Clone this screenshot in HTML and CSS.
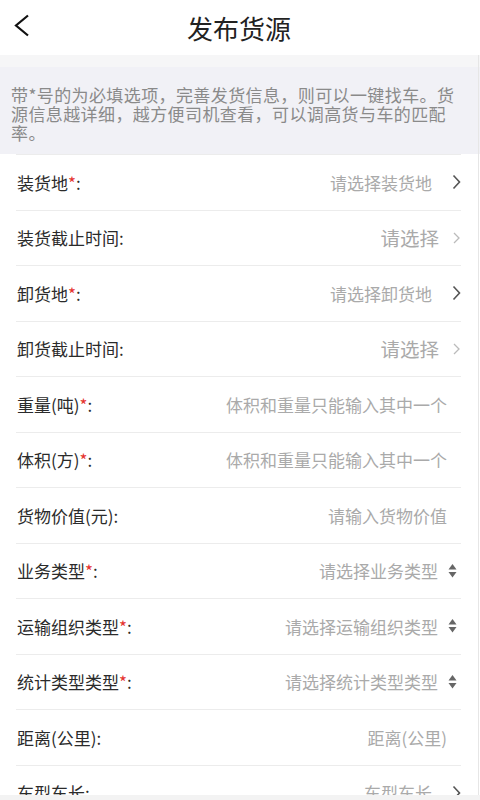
FILE: index.html
```html
<!DOCTYPE html>
<html lang="zh-CN">
<head>
    <meta charset="UTF-8">
    <meta name="viewport" content="width=device-width, initial-scale=1.0">
    <title>发布货源</title>
    <link rel="stylesheet" href="styles.css">
</head>
<body>
    <div class="page">
        <header class="topbar">
            <button class="back" type="button" aria-label="返回">
                <svg width="16" height="24" viewBox="0 0 16 24"><polyline points="14,1.5 2,11.5 14,21.5" fill="none" stroke="#111" stroke-width="2.2"/></svg>
            </button>
            <h1 class="title">发布货源</h1>
        </header>

        <div class="scroll">
            <div class="gap"></div>
            <p class="notice">带*号的为必填选项，完善发货信息，则可以一键找车。货源信息越详细，越方便司机查看，可以调高货与车的匹配率。</p>

            <ul class="form-list">
                <li class="row">
                    <span class="label">装货地<em>*</em>:</span>
                    <span class="value">请选择装货地</span>
                    <svg class="arrow" width="9" height="16" viewBox="0 0 9 16"><polyline points="1.5,1.5 7.5,8 1.5,14.5" fill="none" stroke="#555" stroke-width="1.6"/></svg>
                </li>
                <li class="row">
                    <span class="label">装货截止时间:</span>
                    <span class="value big">请选择</span>
                    <svg class="arrow small" width="7" height="12" viewBox="0 0 7 12"><polyline points="1,1 6,6 1,11" fill="none" stroke="#bbb" stroke-width="1.3"/></svg>
                </li>
                <li class="row">
                    <span class="label">卸货地<em>*</em>:</span>
                    <span class="value">请选择卸货地</span>
                    <svg class="arrow" width="9" height="16" viewBox="0 0 9 16"><polyline points="1.5,1.5 7.5,8 1.5,14.5" fill="none" stroke="#555" stroke-width="1.6"/></svg>
                </li>
                <li class="row">
                    <span class="label">卸货截止时间:</span>
                    <span class="value big">请选择</span>
                    <svg class="arrow small" width="7" height="12" viewBox="0 0 7 12"><polyline points="1,1 6,6 1,11" fill="none" stroke="#bbb" stroke-width="1.3"/></svg>
                </li>
                <li class="row">
                    <span class="label">重量(吨)<em>*</em>:</span>
                    <span class="value input">体积和重量只能输入其中一个</span>
                </li>
                <li class="row">
                    <span class="label">体积(方)<em>*</em>:</span>
                    <span class="value input">体积和重量只能输入其中一个</span>
                </li>
                <li class="row">
                    <span class="label">货物价值(元):</span>
                    <span class="value input">请输入货物价值</span>
                </li>
                <li class="row">
                    <span class="label">业务类型<em>*</em>:</span>
                    <span class="value">请选择业务类型</span>
                    <svg class="sort" width="9" height="16" viewBox="0 0 9 16"><polygon points="4.5,1 8.5,6.5 0.5,6.5" fill="#666"/><polygon points="0.5,9 8.5,9 4.5,14.5" fill="#666"/></svg>
                </li>
                <li class="row">
                    <span class="label">运输组织类型<em>*</em>:</span>
                    <span class="value">请选择运输组织类型</span>
                    <svg class="sort" width="9" height="16" viewBox="0 0 9 16"><polygon points="4.5,1 8.5,6.5 0.5,6.5" fill="#666"/><polygon points="0.5,9 8.5,9 4.5,14.5" fill="#666"/></svg>
                </li>
                <li class="row">
                    <span class="label">统计类型类型<em>*</em>:</span>
                    <span class="value">请选择统计类型类型</span>
                    <svg class="sort" width="9" height="16" viewBox="0 0 9 16"><polygon points="4.5,1 8.5,6.5 0.5,6.5" fill="#666"/><polygon points="0.5,9 8.5,9 4.5,14.5" fill="#666"/></svg>
                </li>
                <li class="row">
                    <span class="label">距离(公里):</span>
                    <span class="value input">距离(公里)</span>
                </li>
                <li class="row">
                    <span class="label">车型车长:</span>
                    <span class="value">车型车长</span>
                    <svg class="arrow" width="9" height="16" viewBox="0 0 9 16"><polyline points="1.5,1.5 7.5,8 1.5,14.5" fill="none" stroke="#555" stroke-width="1.6"/></svg>
                </li>
            </ul>
            <div class="scrollbar"></div>
        </div>

        <footer class="bottom-bar"></footer>
    </div>
</body>
</html>
```

FILE: styles.css
```css
/* page frame */
body {
    margin: 0;
    font-family: "Noto Sans CJK SC", "Noto Sans", sans-serif;
    color: #333;
    background: #fff;
}

.page {
    height: 800px;
    display: flex;
    flex-direction: column;
    overflow: hidden;
}

/* top bar */
.topbar {
    height: 55px;
    flex: none;
    display: flex;
    align-items: center;
    justify-content: center;
    position: relative;
    background: #fff;
}

.back {
    position: absolute;
    left: 14px;
    top: 14px;
    padding: 0;
    border: none;
    background: none;
}

.title {
    margin: 0;
    font-size: 26px;
    font-weight: normal;
    color: #222;
    line-height: 1;
    margin-left: -2px;
}

/* scrolling content */
.scroll {
    flex: 1;
    overflow: hidden;
    position: relative;
}

.gap {
    height: 12px;
    background: #f6f6f7;
}

.notice {
    margin: 0;
    padding: 18px 20px 12px 11px;
    background: #f1f1f6;
    font-size: 17px;
    letter-spacing: 0.4px;
    line-height: 19px;
    color: #8a8a8a;
}

.form-list {
    list-style: none;
    margin: 0 19px 0 16px;
    padding: 0;
}

.row {
    height: 55.5px;
    box-sizing: border-box;
    border-top: 1px solid #ececec;
    display: flex;
    align-items: center;
    padding-left: 1px;
}

.label {
    font-size: 17px;
    color: #2b2b2b;
    flex: 1;
    white-space: nowrap;
}

.label em {
    font-style: normal;
    color: #e5332f;
}

.value {
    font-size: 17px;
    color: #aaa;
    white-space: nowrap;
}

.value.big {
    font-size: 19.5px;
}

.value.input {
    margin-right: 14px;
}

.arrow {
    margin-left: 20px;
    margin-right: 0;
}

.arrow.small {
    margin-left: 14px;
    margin-right: 1px;
}

.sort {
    margin-left: 10px;
    margin-right: 4px;
}

.scrollbar {
    position: absolute;
    top: 0;
    bottom: 0;
    right: 1px;
    width: 1px;
    background: #e6e6e6;
}

/* bottom toolbar, mostly off screen */
.bottom-bar {
    height: 5px;
    flex: none;
    background: #f3f3f3;
}
```
